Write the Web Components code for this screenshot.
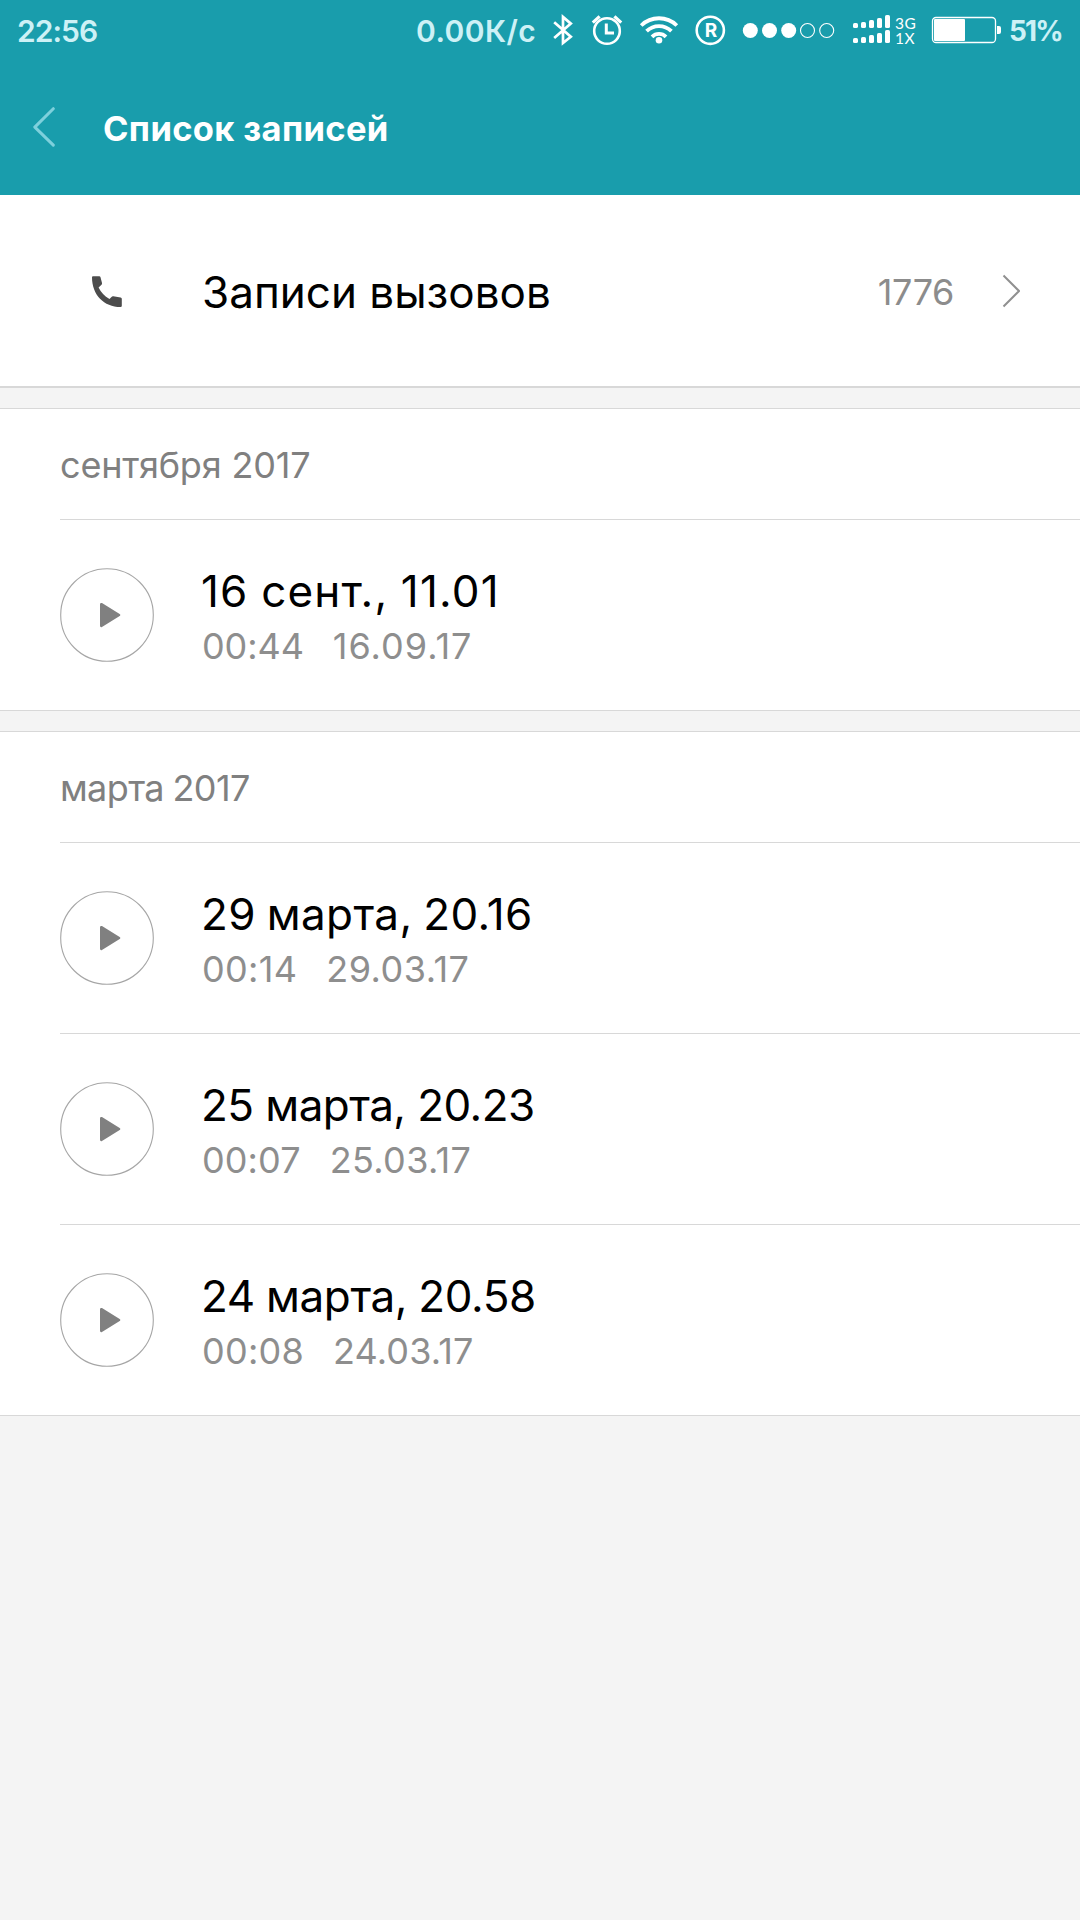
<!DOCTYPE html>
<html lang="ru">
<head>
<meta charset="utf-8">
<title>Список записей</title>
<style>
html,body{margin:0;height:100%;background:#f4f4f4}
body{font-family:Inter,Roboto,sans-serif;color:#000}
</style>
</head>
<body>
<app-screen>
  <status-bar slot="top" time="22:56" speed="0.00К/с" battery="51%"></status-bar>
  <title-bar slot="top">Список записей</title-bar>
  <calls-row count="1776">Записи вызовов</calls-row>
  <record-group label="сентября 2017" style="--label-track:-.17px">
    <record-row length="00:44" date="16.09.17" style="--t:1.2px;--l:-.1px;--d:1px;--w:-1px">16 сент., 11.01</record-row>
  </record-group>
  <record-group label="марта 2017" style="--label-track:-.6px;--label-word:-1px">
    <record-row length="00:14" date="29.03.17" style="--t:.4px;--l:.3px;--d:.5px;--w:-2px">29 марта, 20.16</record-row>
    <record-row length="00:07" date="25.03.17" style="--t:-.55px;--l:.1px;--d:.35px">25 марта, 20.23</record-row>
    <record-row length="00:08" date="24.03.17" style="--t:-.38px;--l:.25px;--d:.15px;--w:-.8px">24 марта, 20.58</record-row>
  </record-group>
</app-screen>
<script>
class Base extends HTMLElement {
  connectedCallback() {
    if (this.shadowRoot) return;
    this.attachShadow({ mode: 'open' }).innerHTML = this.view();
  }
  a(name) { return this.getAttribute(name) || ''; }
}

customElements.define('app-screen', class extends Base {
  view() { return `<style>
    :host{display:flex;flex-direction:column;width:1080px;min-height:1920px;background:#f4f4f4}
    header{background:#199dac;height:195px;display:flex;flex-direction:column}
    main{display:flex;flex-direction:column;gap:20px}
  </style><header><slot name="top"></slot></header><main><slot></slot></main>`; }
});

customElements.define('status-bar', class extends Base {
  bars(base) {
    return [5, 6, 8, 10, 13].map((h, i) =>
      `<rect x="${2 + i * 8}" y="${base - h}" width="5" height="${h}" rx="1.6"/>`).join('');
  }
  view() {
    const dots = [9.3, 28.5, 47.7, 66.5, 85.7].map((x, i) => i < 3
      ? `<circle cx="${x}" cy="30.5" r="7.5" fill="#fff"/>`
      : `<circle cx="${x}" cy="30.5" r="7" fill="none" stroke="#fff" stroke-width="1.1"/>`).join('');
    return `<style>
    :host{display:grid;height:62px;padding-left:17px;align-items:center;
      grid-template-columns:399px 135px 39px 48px 56px 47px 110px 79px 79px 1fr;
      font-weight:600;font-size:30px;line-height:62px;color:#cdf1f6;white-space:nowrap}
    svg{display:block;overflow:visible;height:62px}
    .line{fill:none;stroke:#fff}
    .time{letter-spacing:-.95px}.speed{letter-spacing:.43px}
    .pct{font-size:28px;font-weight:650;letter-spacing:-1.9px}
    .reg{position:relative;height:62px}
    .reg b{position:absolute;left:3px;top:0;width:28px;text-align:center;font-size:19px;font-weight:700;line-height:61px;color:#fff}
    .net{display:flex;gap:1px;align-items:center}
    .gen{display:flex;flex-direction:column;gap:1px;font:400 15.5px/14px Lato,sans-serif;letter-spacing:.4px;color:#fff;padding-bottom:1px}
  </style>
  <span class="time">${this.a('time')}</span>
  <span class="speed">${this.a('speed')}</span>
  <svg width="24"><path class="line" stroke-width="2.7" d="M3.2 22.3 19.8 36.8 12 43V17l7.8 6.6L3.2 38"/></svg>
  <svg width="34"><g class="line" stroke-width="2.6"><circle cx="17" cy="31" r="12.8"/><path stroke-width="3" d="M16.3 23.5V33H24"/><path stroke-width="3.2" d="M2.8 22.6 9.6 16.4M24.4 16.4l6.8 6.2"/></g></svg>
  <svg width="42"><g class="line" stroke-width="3.8"><path d="M3.2 25.5A25.5 25.5 0 0 1 38.8 25.5"/><path d="M8.6 31.2A17.6 17.6 0 0 1 33.4 31.2"/><path d="M14 36.8A10 10 0 0 1 28 36.8"/></g><circle cx="21" cy="40.2" r="3.3" fill="#fff"/></svg>
  <div class="reg"><svg width="34"><circle class="line" stroke-width="2.6" cx="16.3" cy="30.3" r="13.6"/></svg><b>R</b></div>
  <svg width="96">${dots}</svg>
  <div class="net"><svg width="43" fill="#fff">${this.bars(28)}${this.bars(43)}</svg><div class="gen"><span>3G</span><span>1X</span></div></div>
  <svg width="74"><rect class="line" x="2.5" y="17.5" width="63" height="25" rx="3.5" stroke-width="1.3"/><rect x="4" y="19" width="31" height="22" rx="1" fill="#fff"/><path d="M67 26h2q2 0 2 2v4q0 2-2 2h-2z" fill="#fff"/></svg>
  <span class="pct">${this.a('battery')}</span>`; }
});

customElements.define('title-bar', class extends Base {
  view() { return `<style>
    :host{display:flex;align-items:center;height:133px;padding-left:32px;color:#fff;font-size:34.5px;font-weight:650;letter-spacing:.35px;white-space:nowrap}
    svg{display:block;width:71px;height:44px}
  </style><svg><path d="M21.3 1.7 2.8 20.1 21.3 38.1" fill="none" stroke="#7ed0dc" stroke-width="3" stroke-linecap="round" stroke-linejoin="round"/></svg><slot></slot>`; }
});

customElements.define('calls-row', class extends Base {
  view() { return `<style>
    :host{display:flex;align-items:center;height:191px;padding:0 60px 0 84px;background:#fff;border-bottom:2px solid #d8d8d8;white-space:nowrap}
    .phone{width:118px;height:44px;flex:none}
    .name{flex:1;font-size:44px;padding-top:3px}
    .count{font-size:36px;color:#8c8c8c;letter-spacing:-.41px;padding-top:3px;margin-right:48px}
    .go{width:18px;height:34px;flex:none}
  </style>
  <svg class="phone"><path fill="#4c4c4c" d="M9 7.2h6.2q1.1 0 1.3 1L18 14q.2 1-.5 1.7l-2.9 2.8C17 23.3 20.5 27.3 25.5 29.9L27.5 27.9q.8-.8 1.8-.6L36.6 28.5q1.2.2 1.2 1.3V36.8q0 1.2-1.2 1.2C20 38 8 25.8 8 8.2q0-1 1-1z"/></svg>
  <span class="name"><slot></slot></span><span class="count">${this.a('count')}</span>
  <svg class="go"><path d="M1.5 1.5 17 17 1.5 32.5" fill="none" stroke="#909090" stroke-width="2"/></svg>`; }
});

customElements.define('record-group', class extends Base {
  view() { return `<style>
    :host{display:block;background:#fff;border-top:1px solid #d8d8d8;border-bottom:1px solid #d8d8d8}
    h2{margin:0 0 0 60px;height:110px;border-bottom:1px solid #d8d8d8;font-size:36px;font-weight:400;line-height:112px;color:#808080;letter-spacing:var(--label-track);word-spacing:var(--label-word,0);white-space:nowrap}
    ::slotted(record-row:not(:last-child)){border-bottom:1px solid #d8d8d8}
  </style><h2>${this.a('label')}</h2><slot></slot>`; }
});

customElements.define('record-row', class extends Base {
  view() { return `<style>
    :host{display:flex;height:190px;margin-left:60px;white-space:nowrap}
    svg{display:block;width:94px;height:94px;margin:48px 47px 0 0}
    .info{display:flex;flex-direction:column;gap:3px;padding-top:45px;line-height:52px}
    .name{font-size:44px;letter-spacing:var(--t);word-spacing:var(--w,0)}
    .meta{display:flex;gap:29px;padding-left:1px;font-size:36px;color:#8e8e8e}
    .len{letter-spacing:var(--l)}.date{letter-spacing:var(--d)}
  </style>
  <svg><circle cx="47" cy="47" r="46.3" fill="none" stroke="#a6a6a6" stroke-width="1.1"/><path d="M41.3 36.2 59 47 41.3 57.8z" fill="#808080" stroke="#808080" stroke-width="2.6" stroke-linejoin="round"/></svg>
  <div class="info"><span class="name"><slot></slot></span><div class="meta"><span class="len">${this.a('length')}</span><span class="date">${this.a('date')}</span></div></div>`; }
});
</script>
</body>
</html>
